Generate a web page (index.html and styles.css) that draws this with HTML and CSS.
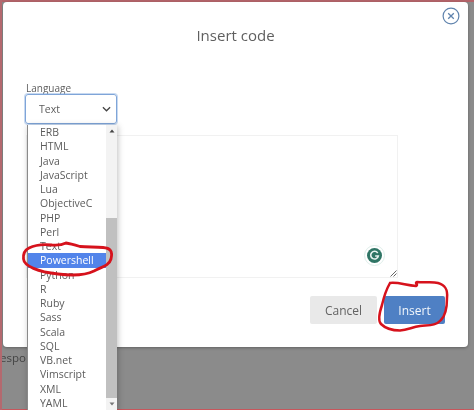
FILE: index.html
```html
<!DOCTYPE html>
<html lang="en">
<head>
<meta charset="utf-8">
<title>Insert code</title>
<link rel="stylesheet" href="styles.css">
</head>
<body>
<div class="screen">
  <div class="topline"></div>
  <main class="modal">
    <button class="close" aria-label="Close">
      <svg viewBox="0 0 18 18" width="18" height="18"><circle cx="9" cy="9" r="7.9" fill="none" stroke="#5f83ad" stroke-width="1.2"/><path d="M6.2 6.2l5.6 5.6M11.800 6.2l-5.6 5.6" stroke="#5f83ad" stroke-width="1.3" fill="none"/></svg>
    </button>
    <h1 class="title">Insert code</h1>
    <div class="form">
      <div class="field-label">Language</div>
      <div class="select">
        <span>Text</span>
        <svg viewBox="0 0 10 6" width="9" height="6"><path d="M1 1l4 4 4-4" fill="none" stroke="#444" stroke-width="1.4"/></svg>
      </div>
      <div class="textarea">
        <div class="grammarly"><svg viewBox="0 0 14 14" width="15" height="15"><circle cx="7" cy="7" r="7" fill="#2f7565"/><path d="M10 4.600A3.600 3.600 0 1 0 10.600 7.400H7.600" fill="none" stroke="#e8f2ef" stroke-width="1.5"/></svg></div>
        <svg class="grip" viewBox="0 0 7 7" width="7" height="7"><path d="M6.500 .5L.5 6.500M6.500 3.500L3.500 6.500" stroke="#666" stroke-width="1"/></svg>
      </div>
    </div>
    <div class="actions">
      <button class="btn btn-cancel">Cancel</button>
      <button class="btn btn-insert">Insert</button>
    </div>
  </main>
  <div class="behind">espor</div>
  <div class="bottomline"></div>

  <div class="menu">
    <ul class="options">
      <li>ERB</li><li>HTML</li><li>Java</li><li>JavaScript</li><li>Lua</li><li>ObjectiveC</li><li>PHP</li><li>Perl</li><li>Text</li>
      <li class="selected">Powershell</li>
      <li>Python</li><li>R</li><li>Ruby</li><li>Sass</li><li>Scala</li><li>SQL</li><li>VB.net</li><li>Vimscript</li><li>XML</li><li>YAML</li>
    </ul>
    <div class="scrollbar">
      <svg viewBox="0 0 10 12" width="10" height="12"><path d="M2.500 7.500L5 4.500 7.500 7.500z" fill="#444"/></svg>
      <div class="thumb"></div>
      <svg viewBox="0 0 10 12" width="10" height="12"><path d="M2.500 4.500L5 7.500 7.500 4.500z" fill="#777"/></svg>
    </div>
  </div>

  <svg class="ink" viewBox="0 0 474 410" width="474" height="410">
    <path d="M29 248C25 250 23 254 23.500 259C24 266 38 272 58 274C70 275.500 84 276 94 271C101 267 109 266 111 259C113 251 110 248 103 247.500C95 247 88 247 80 246.500C75 245 70 243.500 66 243C62 245 58 245.500 52 245C44 244 35 245 29 248Z" fill="none" stroke="#d6121c" stroke-width="2.800"/>
    <path d="M390 283C386 290 384 296 382 305C379 314 378 321 381 324C385 328 392 330.500 400 330.500C408 330 412 327 420 326C428 325 436 326 441 320C446 315 447 308 447 298C448 289 445 285 438 283C432 281.500 425 283 417 282C414 282.500 419 285 416 286C405 285 398 282 390 283Z" fill="none" stroke="#d6121c" stroke-width="2.500"/>
  </svg>
</div>
</body>
</html>
```

FILE: styles.css
```css
* { box-sizing: border-box; }
html, body { margin: 0; padding: 0; }
body {
  width: 474px;
  height: 410px;
  overflow: hidden;
  font-family: "Open Sans", "Noto Sans", sans-serif;
  color: #666;
}
.screen {
  position: relative;
  width: 474px;
  height: 410px;
  overflow: hidden;
  background: #8b8b8b;
  display: flex;
  flex-direction: column;
  border-left: 2px solid #b4696f;
  filter: blur(0.45px);
}
.topline { height: 2px; flex: none; background: #b4646a; margin-left: -2px; }
.modal {
  position: relative;
  flex: none;
  width: 465px;
  height: 345px;
  margin-left: 1px;
  background: #fff;
  border-radius: 4px;
  box-shadow: 0 1px 3px rgba(0, 0, 0, .3);
  display: flex;
  flex-direction: column;
}
.close {
  position: absolute;
  top: 5px;
  right: 8px;
  width: 18px;
  height: 18px;
  padding: 0;
  border: 0;
  background: none;
  display: flex;
}
.title {
  margin: 23px 0 0;
  font-size: 15px;
  line-height: 20px;
  font-weight: 400;
  color: #5f5f5f;
  text-align: center;
}
.form {
  padding: 37px 70px 0 23px;
  display: flex;
  flex-direction: column;
}
.field-label { font-size: 10px; line-height: 12px; color: #5f5f5f; }
.select {
  width: 92px;
  height: 30px;
  margin-left: -1px;
  padding: 0 5px 0 13px;
  display: flex;
  align-items: center;
  justify-content: space-between;
  border: 1px solid #7fa5d8;
  border-radius: 3px;
  box-shadow: 0 0 0 1px rgba(130, 170, 225, .45);
  font-size: 10.500px;
  color: #5c5c5c;
}
.textarea {
  position: relative;
  height: 143px;
  margin-top: 11px;
  border: 1px solid #f1f1f1;
}
.grammarly {
  position: absolute;
  right: 12px;
  bottom: 11px;
  width: 21px;
  height: 21px;
  padding: 2px;
  border: 1px solid #dfeeea;
  border-radius: 50%;
  display: flex;
}
.grip { position: absolute; right: 0; bottom: 0; }
.actions {
  margin-top: 18px;
  padding-right: 23px;
  display: flex;
  justify-content: flex-end;
  gap: 7px;
}
.btn {
  height: 28px;
  padding: 0;
  border: 0;
  border-radius: 2px;
  font-family: inherit;
  font-size: 12px;
}
.btn-cancel { width: 67px; background: #e9e9e9; color: #636363; }
.btn-insert { width: 61px; background: #4f80c4; color: #f2f6fb; }
.behind {
  position: absolute;
  left: -2px;
  top: 350px;
  font-size: 11.500px;
  line-height: 16px;
  color: #444;
}
.bottomline {
  position: absolute;
  left: -2px;
  right: 0;
  bottom: 0;
  height: 1px;
  background: #c8565c;
}
.menu {
  position: absolute;
  left: 25px;
  top: 125px;
  width: 90px;
  height: 285px;
  display: flex;
  background: #fff;
  border-left: 1px solid #8a8a8a;
  box-shadow: 1px 1px 6px rgba(0, 0, 0, .25);
}
.options {
  flex: 1;
  margin: 0;
  padding: 0;
  list-style: none;
  font-size: 10.500px;
  line-height: 14.250px;
}
.options li { padding-left: 12px; color: #5c5c5c; }
.options li.selected { background: #5284ea; color: #fff; }
.scrollbar {
  flex: none;
  width: 11px;
  background: #f3f3f3;
  display: flex;
  flex-direction: column;
  align-items: center;
  padding-bottom: 3px;
}
.scrollbar svg { flex: none; }
.thumb { width: 100%; flex: none; height: 180px; margin-top: 81px; background: #c0c0c0; }
.ink { position: absolute; left: -2px; top: 0; }
```
